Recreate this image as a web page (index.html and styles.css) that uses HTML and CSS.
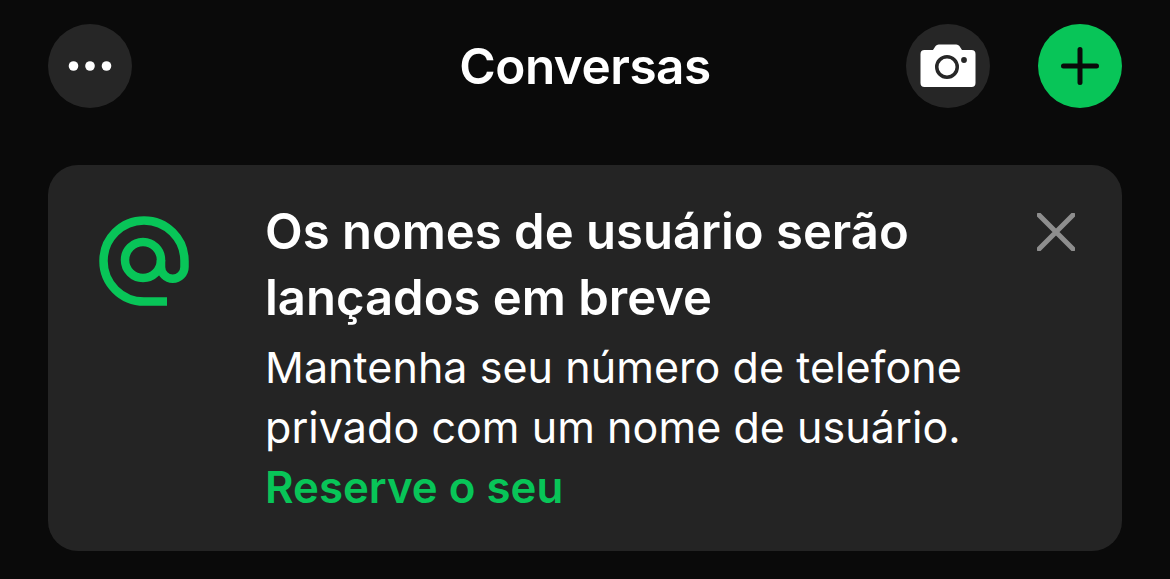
FILE: index.html
```html
<!DOCTYPE html>
<html lang="pt-BR">
<head>
<meta charset="utf-8">
<title>Conversas</title>
<link rel="stylesheet" href="styles.css">
</head>
<body>
<header class="topbar">
  <button class="round" aria-label="Mais">
    <svg width="44" height="12" viewBox="0 0 44 12"><circle cx="5.500" cy="6" r="4.800"/><circle cx="22" cy="6" r="4.800"/><circle cx="38.500" cy="6" r="4.800"/></svg>
  </button>
  <h1 class="title">Conversas</h1>
  <div class="actions">
    <button class="round" aria-label="Câmera">
      <svg width="56" height="44" viewBox="0 0 56 44"><path fill-rule="evenodd" d="M4.500 6h8.500l2.600-4A4 4 0 0 1 18.900 0.500h17.200a4 4 0 0 1 3.300 1.500L42 6h9.500a4 4 0 0 1 4 4v29a4 4 0 0 1-4 4h-47a4 4 0 0 1-4-4V10a4 4 0 0 1 4-4Zm22.500 5a12 12 0 1 0 0 24 12 12 0 0 0 0-24Zm0 3.500a8.500 8.500 0 1 1 0 17 8.500 8.500 0 0 1 0-17Zm17-1.400a2.900 2.900 0 1 0 0 5.800 2.900 2.900 0 0 0 0-5.800Z" fill="#fff"/></svg>
    </button>
    <button class="round green" aria-label="Nova conversa">
      <svg width="38" height="38" viewBox="0 0 38 38"><path d="M19 2.500v33M2.500 19h33" stroke="#0a0a0a" stroke-width="5" stroke-linecap="round" fill="none"/></svg>
    </button>
  </div>
</header>
<section class="card">
  <svg class="at" width="98" height="96" viewBox="0 0 98 96"><g fill="none" stroke="#08c558" stroke-width="8.500"><path d="M73 88.500H50A40.500 40.500 0 1 1 90.500 48V54A11.750 11.750 0 0 1 67 54V47"/><circle cx="49" cy="47" r="18"/></g></svg>
  <div class="copy">
    <h2 class="heading">Os nomes de usuário serão lançados em breve</h2>
    <p class="body">Mantenha seu número de telefone privado com um nome de usuário.</p>
    <a class="link" href="#">Reserve o seu</a>
  </div>
  <button class="close" aria-label="Fechar">
    <svg width="38" height="38" viewBox="0 0 38 38"><path d="M2 2l34 34M36 2L2 36" stroke="#8e8e8e" stroke-width="5" stroke-linecap="round" fill="none"/></svg>
  </button>
</section>
</body>
</html>
```
FILE: styles.css
```css
* { box-sizing: border-box; }
html, body { height: 100%; }
body {
  margin: 0;
  background: #0a0a0a;
  color: #fff;
  font-family: "Inter", "Liberation Sans", sans-serif;
  padding: 24px 48px 0;
  overflow: hidden;
}
.topbar {
  position: relative;
  display: flex;
  justify-content: space-between;
  align-items: center;
  height: 84px;
}
.title {
  position: absolute;
  left: 0;
  right: 0;
  margin: 0;
  text-align: center;
  font-size: 49.500px;
  line-height: 84px;
  font-weight: 560;
  letter-spacing: -0.5px;
  pointer-events: none;
}
.actions { display: flex; gap: 48px; }
.round {
  width: 84px;
  height: 84px;
  border: 0;
  padding: 0;
  border-radius: 50%;
  background: #262626;
  display: flex;
  align-items: center;
  justify-content: center;
}
.round svg { fill: #fff; }
.green { background: #08c558; }
.card {
  margin-top: 57px;
  height: 386px;
  border-radius: 30px;
  background: #242424;
  display: flex;
  align-items: flex-start;
  padding: 34px 47px 0 46px;
}
.at { flex: none; margin-top: 14px; }
.copy { flex: 1; margin-left: 73px; min-width: 0; }
.heading {
  margin: 0;
  font-size: 49px;
  line-height: 66px;
  font-weight: 600;
  max-width: 700px;
}
.body {
  margin: 6px 0 0;
  font-size: 43px;
  letter-spacing: 0.06px;
  line-height: 60px;
  font-weight: 400;
  max-width: 720px;
}
.link {
  display: block;
  margin-top: 1px;
  color: #08c558;
  text-decoration: none;
  font-size: 43.800px;
  line-height: 60px;
  font-weight: 600;
}
.close {
  flex: none;
  border: 0;
  padding: 0;
  background: none;
  width: 38px;
  height: 38px;
  margin-top: 14px;
}
```
